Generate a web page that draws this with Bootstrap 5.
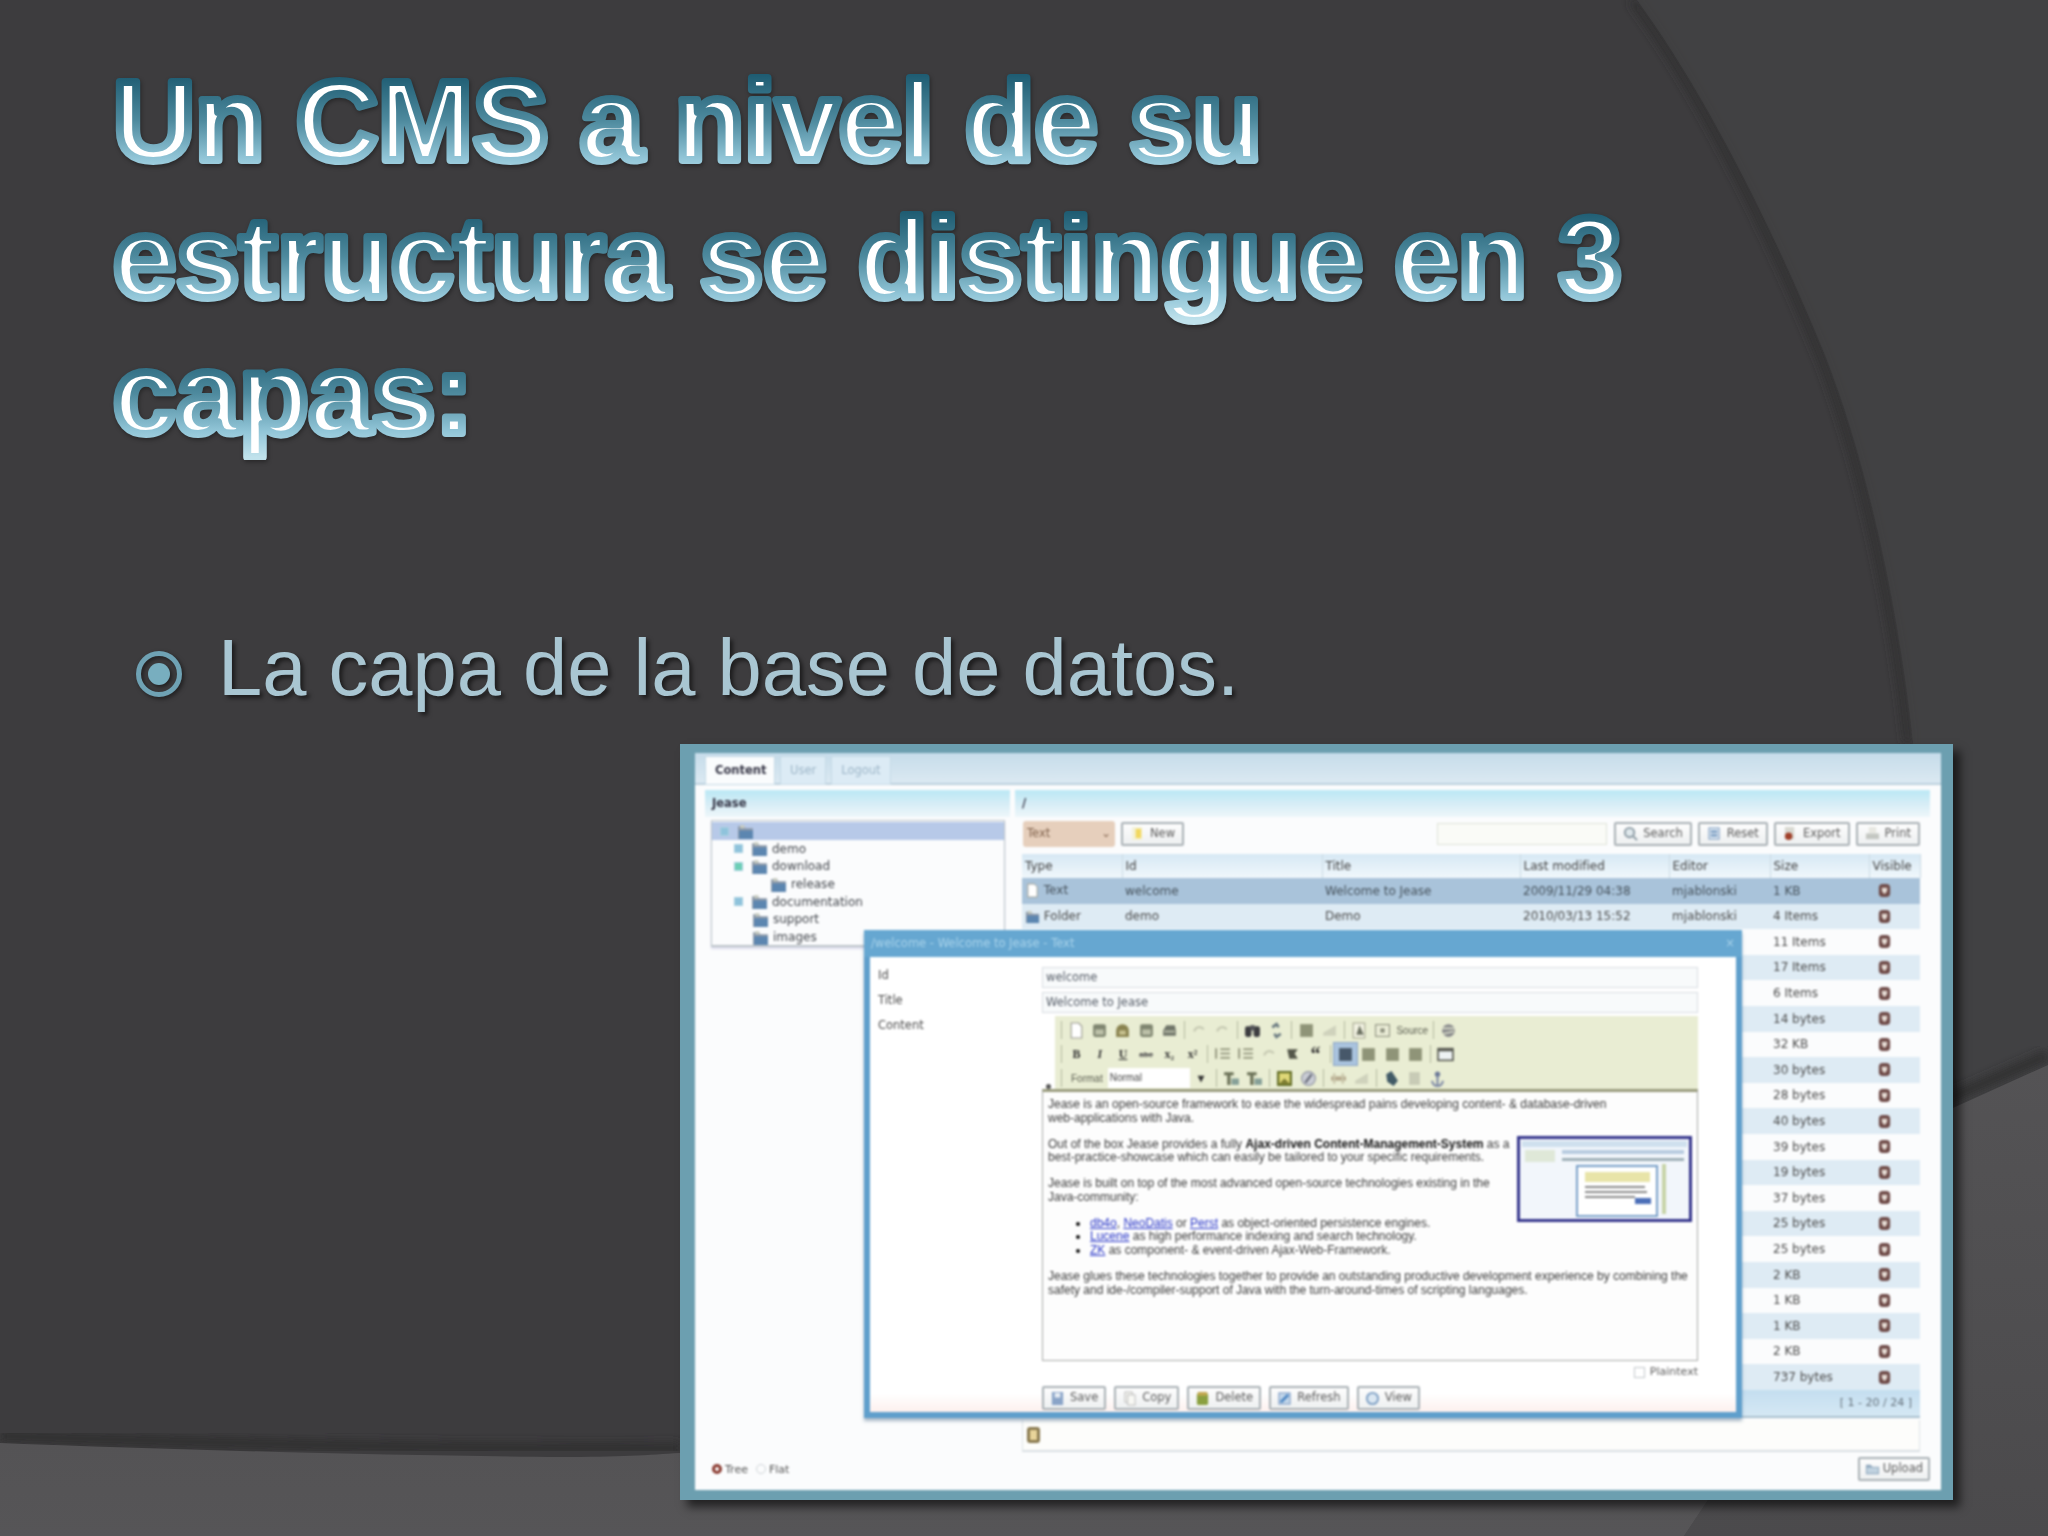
<!DOCTYPE html>
<html lang="es">
<head>
<meta charset="utf-8">
<title>Un CMS a nivel de su estructura</title>
<link href="https://cdn.jsdelivr.net/npm/bootstrap@5.3.0/dist/css/bootstrap.min.css" rel="stylesheet">
<style>
html,body{margin:0;background:#3c3b3d}
.slide-canvas{position:relative;width:2048px;height:1536px;overflow:hidden;background:#3d3c3e;font-family:"Liberation Sans",Arial,sans-serif}
.slide-bg{position:absolute;inset:0;width:2048px;height:1536px}
.slide-flow{position:relative}
.slide-title{margin:0;height:460px}
.title-art{display:block;width:1700px;height:460px;filter:drop-shadow(1px 2px 2px rgba(0,0,0,.35))}
.title-art text{font:700 113.6px "Liberation Sans",Arial,sans-serif;fill:#fff;stroke:url(#titleGrad);stroke-width:8px;stroke-linejoin:round}
.bullet-row{margin-top:163px;padding-left:135px;height:90px;display:flex;align-items:center;gap:35px}
.bullet-text{font-size:79.5px;line-height:90px;color:#a9c6d2;text-shadow:3px 3px 4px rgba(0,0,0,.55)}
.bullet-mark{flex:none;width:48px;height:48px;filter:drop-shadow(2px 2px 2px rgba(0,0,0,.5));margin-top:12px}
.shot{margin:31px 0 0 680px;width:1273px;height:756px;padding:9px 12px 10px 15px;background:#6c9fb0;box-shadow:7px 7px 9px rgba(0,0,0,.6)}
.shot-in{position:relative;height:100%;background:#fbfcfd;display:flex;flex-direction:column;font:11.5px/1.2 "DejaVu Sans",sans-serif;color:#484848;filter:blur(.85px)}
.tab-strip{height:32px;flex:none;padding:3px 10px 0;display:flex;gap:5px;background:linear-gradient(180deg,#c6dcea,#dbe9f2);border-bottom:2px solid #bcd0dd}
.tab-item{height:29px;padding:0 9px;display:flex;align-items:center;background:#dcebf5;color:#9db6c8;border:1px solid #c5dae6}
.tab-item.on{background:#fafcfd;color:#334;font-weight:700;width:70px}
.app-body{flex:1;display:flex;gap:5px;padding:5px 11px 2px 10px;min-height:0}
.app-left{width:305px;flex:none;display:flex;flex-direction:column}
.app-right{flex:1;display:flex;flex-direction:column;min-width:0}
.pane-head{height:27px;flex:none;padding:0 7px;display:flex;align-items:center;background:linear-gradient(180deg,#bfe9f5 10%,#d6edf6 50%,#eef7fa);font-weight:700;color:#334}
.tree-box{margin:3px 5px 0 6px;height:127px;border:1px solid #bcc4c9;border-width:1px 1px 2px;padding:1px 0;box-shadow:0 2px 2px #dde;font-size:12px}
.tree-row{height:17.7px;display:flex;align-items:center;gap:4px;white-space:nowrap;color:#44484e}
.tree-row.sel{height:18px;background:#b7c9e8;padding-left:8px}
.tree-row .ico{width:17px;height:17px}
.lvl1{padding-left:22px}.lvl2{padding-left:58px}.lvl1b{padding-left:40px}
.plus{width:9px;height:9px;flex:none;background:#8fc3dc;border:1px solid #a8d0e0;margin-right:4px}
.plus.g{background:#6ccfb5}
.tree-radio{margin-top:auto;padding:0 0 12px 7px;display:flex;align-items:center;gap:3px;font-size:11px;color:#555}
.radio-on{width:10px;height:10px;border-radius:50%;border:3px solid #8a3a30;background:#fff}
.radio-off{width:10px;height:10px;border-radius:50%;border:1px solid #cfd4d8;margin-left:5px}
.tool-row{height:27px;flex:none;margin-top:3px;padding:0 10px 0 8px;display:flex;align-items:center;gap:6px}
.sel-fake{width:92px;height:26px;padding:0 4px;display:flex;align-items:center;justify-content:space-between;background:#e6cfbc;border-radius:3px;color:#80624c}
.app-btn{display:inline-flex;align-items:center;gap:5px;height:24px;padding:0 7px;font:inherit;color:#5c5c5c;border:2px solid #a9b1b5;border-radius:2px;background:linear-gradient(180deg,#fdfdfd,#eef0f1);--bs-btn-padding-y:0}
.search-fake{width:170px;height:22px;margin-left:auto;margin-right:1px;border:1px solid #dfe3d8;background:#fafbf7}
.grid-wrap{margin:7px 10px 0 7px;flex:none}
.grid-table{table-layout:fixed;width:898px;margin:0;color:#4c4c4c;--bs-table-bg:transparent;font-size:12px}
.grid-table th,.grid-table td{padding:0 0 0 3px;border:0;white-space:nowrap;overflow:hidden;vertical-align:middle;background:transparent;box-shadow:none}
.grid-table th{height:24px;font-weight:400;background:linear-gradient(180deg,#d6e8f4,#f0f7fb);border-right:1px solid #ccdbe4;color:#444}
.grid-table td{height:25.6px}
.grid-table tbody tr:nth-child(even) td{background:#deebf4}
.grid-table tbody tr:nth-child(odd) td{background:#fbfcfd}
.grid-table tbody tr.row-sel td{background:#a9c3da;color:#46525c}
.grid-foot{height:28px;display:flex;align-items:center;justify-content:flex-end;padding-right:8px;background:linear-gradient(180deg,#c4def0,#d5e8f4);border-bottom:2px solid #a9bfce;color:#66727c;font-size:11px}
.bottom-box{margin:2px 10px 0 7px;height:32px;flex:none;border:1px solid #dfe4e7;border-top:0;border-bottom:2px solid #d9dfe3;padding-left:4px;display:flex;align-items:center;background:#fdfdfb}
.note-ico{width:13px;height:16px;border:3px solid #8a7a50;border-radius:3px;background:#e8d49a}
.up-row{display:flex;justify-content:flex-end;padding:5px 0 0;flex:none}
.up-row .app-btn{padding:0 5px;gap:3px}
.dlg{position:absolute;left:169px;top:177px;width:878px;height:488px;background:#fff;border:6px solid #5f9fcc;border-top:0;box-shadow:0 3px 3px rgba(90,120,150,.5);display:flex;flex-direction:column}
.dlg-bar{height:27px;flex:none;margin:0 -6px;padding:0 7px;display:flex;align-items:center;justify-content:space-between;background:#66a7d1;color:#a9d3ea;font-size:11.5px}
.dlg-main{flex:1;display:grid;grid-template-columns:172px 656px;padding:10px 0 0 0;grid-auto-rows:min-content;background:linear-gradient(180deg,#fff 96%,#fdf0ee)}
.dlg-lbl{padding-left:8px;color:#4c4c4c;height:25px;font-size:11.5px;padding-top:2px}
.fake-input{height:21px;margin-bottom:4px;border:1px solid #d8dde2;padding:0 3px;display:flex;align-items:center;color:#565d68;background:#f8fafb}
.fck-tools{height:73px;margin:-1px 0 0 13px;padding:2px 0 0 3px;background:#e9edd3}
.fck-row{height:24px;display:flex;align-items:center;color:#333}
.tb{width:23.2px;flex:none;display:flex;justify-content:center;align-items:center;font-size:12px;font-family:"Liberation Serif",serif;font-weight:700}
.tb.sep{width:1px;height:18px;background:#b4b9a0;margin:0 3px}
.tb.act{background:#a9c3de;outline:1px solid #8ea7c4;height:22px}
.tb-s{font:700 8px "Liberation Sans",sans-serif;color:#555}
.tb .ico{width:17px;height:17px}
.ico{width:15px;height:15px;display:block}
.fck-lbl{font:10px "Liberation Sans",sans-serif;color:#5a5d50;padding:0 5px 0 6px}
.fck-sel{width:82px;height:20px;background:#fff;font:10px "Liberation Sans",sans-serif;padding:4px 2px;color:#444}
.fck-src{font:10px "Liberation Sans",sans-serif;color:#5a5d50;padding:0 2px 0 2px}
.editor{position:relative;height:272px;border:1px solid #a8aaa8;border-top:3px solid #9a9c7e;padding:6px 5px;font:12px/13.6px "Liberation Sans",sans-serif;color:#3c3c3c;background:#fdfdfd}
.editor::before{content:"";position:absolute;left:3px;top:-8px;width:5px;height:5px;background:#555;border-radius:50%}
.editor p{margin:0 0 12.4px;white-space:nowrap}
.editor ul{margin:0 0 12.4px;padding-left:42px}
.editor li::marker{color:#111}
.editor strong{color:#111;font-weight:700}
.editor a{color:#2a37c8}
.thumb-float{float:right;width:175px;height:86px;margin:-2px 0 0 4px;display:block}
.plain-row{grid-column:2;height:20px;padding:2px 0 0;display:flex;justify-content:flex-end;align-items:center;gap:5px;color:#5c5c5c;font-size:11px}
.fake-check{width:11px;height:11px;border:1px solid #c4c8cc}
.dlg-btns{grid-column:2;display:flex;gap:8px;margin-top:5px}
.dlg-btns .app-btn{padding:0 6px}
</style>
</head>
<body>
<svg width="0" height="0" class="d-block position-absolute">
<defs>
<linearGradient id="titleGrad" x1="0" y1="0" x2="0" y2="1"><stop offset=".14" stop-color="#1e5c72"/><stop offset=".5" stop-color="#4e8a9e"/><stop offset=".8" stop-color="#92c6d8"/><stop offset="1" stop-color="#c0e2ec"/></linearGradient>
<symbol id="i-folder" viewBox="0 0 16 16"><path d="M1 3h5l2 2h7v10H1z" fill="#8c98a8"/><path d="M2 7h13v8H2z" fill="#5c86b0"/><path d="M3 2h4v3H3z" fill="#c8ccc0"/></symbol>
<symbol id="i-vis" viewBox="0 0 14 16"><rect x="1" y="1" width="12" height="14" rx="4" fill="#6f4b48"/><path d="M4 5h6l-.5 4L7 12 4.500 9z" fill="#e6dcd4"/></symbol>
<symbol id="i-doc" viewBox="0 0 16 16"><path d="M3 1h7l3 3v11H3z" fill="#fff" stroke="#9a9a90"/></symbol>
<symbol id="i-block" viewBox="0 0 16 16"><rect x="2" y="2" width="12" height="12" rx="2" fill="#7f8570"/><rect x="4" y="7" width="8" height="5" fill="#bcc0a8"/></symbol>
<symbol id="i-dome" viewBox="0 0 16 16"><path d="M2 14V8a6 6 0 0 1 12 0v6z" fill="#8a8350"/><rect x="5" y="8" width="6" height="4" fill="#c8c290"/></symbol>
<symbol id="i-case" viewBox="0 0 16 16"><path d="M2 8l3-5h8l1 5v5H2z" fill="#6f7468"/><rect x="3" y="8" width="10" height="2" fill="#b4b8a4"/></symbol>
<symbol id="i-faint" viewBox="0 0 16 16"><path d="M3 9a5 5 0 0 1 9-2" fill="none" stroke="#c6c9b2" stroke-width="2"/></symbol>
<symbol id="i-bin" viewBox="0 0 16 16"><rect x="1" y="4" width="6" height="10" rx="2" fill="#3d3d40"/><rect x="9" y="4" width="6" height="10" rx="2" fill="#3d3d40"/><rect x="6" y="3" width="4" height="5" fill="#55555a"/></symbol>
<symbol id="i-swap" viewBox="0 0 16 16"><path d="M4 5l4-3 2 3M12 11l-4 3-2-3" fill="none" stroke="#6a7a80" stroke-width="2.500"/></symbol>
<symbol id="i-list" viewBox="0 0 16 16"><path d="M6 3h9M6 7h9M6 11h9M2 2v10" stroke="#85886f" stroke-width="1.500"/></symbol>
<symbol id="i-indent" viewBox="0 0 16 16"><path d="M3 3h10l-3 4 3 5H5z" fill="#54574a"/></symbol>
<symbol id="i-align" viewBox="0 0 16 16"><rect x="2" y="2" width="12" height="12" fill="#8f9478"/></symbol>
<symbol id="i-alignon" viewBox="0 0 16 16"><rect x="2" y="2" width="12" height="12" fill="#47586a"/></symbol>
<symbol id="i-win" viewBox="0 0 16 16"><rect x="1" y="2.500" width="14" height="11" fill="#eef2f4" stroke="#55574f" stroke-width="1.500"/><path d="M1 4h14" stroke="#55574f" stroke-width="2"/></symbol>
<symbol id="i-src" viewBox="0 0 16 16"><rect x="1.500" y="2.500" width="13" height="11" fill="#eceed8" stroke="#8b8e7c"/><rect x="6" y="6" width="4" height="4" fill="#8b8e7c"/></symbol>
<symbol id="i-prev" viewBox="0 0 16 16"><rect x="2" y="1" width="11" height="14" fill="#f2f2e2" stroke="#a6a890"/><path d="M8 3l4 9H5z" fill="#6d7262"/></symbol>
<symbol id="i-earth" viewBox="0 0 16 16"><circle cx="8" cy="8" r="6" fill="#87888a"/><path d="M2 6h12M3 11l10-2" stroke="#dcdfcc" stroke-width="1.500"/></symbol>
<symbol id="i-tcol" viewBox="0 0 16 16"><path d="M1 2h9v3H7v9H4V5H1z" fill="#6a7056"/><rect x="8" y="8" width="7" height="6" fill="#86a098"/></symbol>
<symbol id="i-pic" viewBox="0 0 16 16"><rect x="1" y="1" width="14" height="14" fill="#5f6a20"/><rect x="3" y="3" width="10" height="10" fill="#e0d878"/><path d="M3 13l5-5 5 5z" fill="#7a7a30"/></symbol>
<symbol id="i-flash" viewBox="0 0 16 16"><circle cx="8" cy="8" r="6.500" fill="#c9ccd4" stroke="#8f93a0"/><path d="M11 4L5 12" stroke="#6a6e7c" stroke-width="2"/></symbol>
<symbol id="i-tbl" viewBox="0 0 16 16"><path d="M1 8h14" stroke="#b6aa8e" stroke-width="4"/><path d="M4 3v10M12 3v10" stroke="#c8c4a8" stroke-width="2"/></symbol>
<symbol id="i-smile" viewBox="0 0 16 16"><path d="M2 10L14 3v10H2z" fill="#cfd2bc"/></symbol>
<symbol id="i-dark" viewBox="0 0 16 16"><path d="M3 4l5-3 6 9-4 5-6-4z" fill="#415a66"/></symbol>
<symbol id="i-pale" viewBox="0 0 16 16"><rect x="3" y="2" width="10" height="12" fill="#c8cbb6"/></symbol>
<symbol id="i-anchor" viewBox="0 0 16 16"><circle cx="8" cy="4" r="2.500" fill="#6d7a98"/><path d="M8 6v8M3 10a5 5 0 0 0 10 0" fill="none" stroke="#7f8aa6" stroke-width="2"/></symbol>
<symbol id="i-search" viewBox="0 0 16 16"><circle cx="7" cy="7" r="5" fill="#dfe8ec" stroke="#8b9aa3" stroke-width="2"/><path d="M11 11l4 4" stroke="#8b9aa3" stroke-width="2"/></symbol>
<symbol id="i-reset" viewBox="0 0 16 16"><rect x="2" y="2" width="11" height="12" fill="#d8e4ef" stroke="#7e9cc0"/><path d="M4 6h7M4 10h7" stroke="#5e86b4" stroke-width="2"/></symbol>
<symbol id="i-export" viewBox="0 0 16 16"><rect x="2" y="1" width="10" height="13" fill="#d9d9d2"/><circle cx="6" cy="11" r="4" fill="#a0402a"/></symbol>
<symbol id="i-print" viewBox="0 0 16 16"><rect x="4" y="1" width="8" height="7" fill="#e8e8e2"/><rect x="1" y="8" width="14" height="6" fill="#c4c7c2"/></symbol>
<symbol id="i-new" viewBox="0 0 16 16"><rect x="2" y="1" width="11" height="14" fill="#f4f2da"/><rect x="6" y="3" width="6" height="10" fill="#f2d85f"/></symbol>
<symbol id="i-save" viewBox="0 0 16 16"><rect x="2" y="1" width="12" height="14" fill="#8aa4c8"/><rect x="5" y="2" width="6" height="5" fill="#e8eef5"/></symbol>
<symbol id="i-copy" viewBox="0 0 16 16"><path d="M3 1h8v11H3z" fill="#f3f3ee" stroke="#bbb"/><path d="M6 4h8v11H6z" fill="#f8f8f4" stroke="#bbb"/></symbol>
<symbol id="i-del" viewBox="0 0 16 16"><rect x="2" y="2" width="12" height="13" rx="2" fill="#8aa040"/><rect x="3" y="1" width="10" height="4" fill="#c3a850"/></symbol>
<symbol id="i-ref" viewBox="0 0 16 16"><rect x="2" y="2" width="12" height="12" fill="#c2d6ea" stroke="#7694be"/><path d="M4 12L12 4" stroke="#4f88c4" stroke-width="3"/></symbol>
<symbol id="i-view" viewBox="0 0 16 16"><circle cx="8" cy="8" r="6" fill="#dbe7f2" stroke="#7d9fc4" stroke-width="2"/></symbol>
<symbol id="i-up" viewBox="0 0 16 16"><path d="M1 4h5l2 2h7v8H1z" fill="#8ea6bc"/><rect x="2" y="7" width="12" height="6" fill="#c0d2e0"/></symbol>
</defs>
</svg>

<div class="slide-canvas">
  <svg class="slide-bg" viewBox="0 0 2048 1536" aria-hidden="true">
    <defs>
      <linearGradient id="bgLow" x1="0" y1="0" x2="0" y2="1"><stop offset="0" stop-color="#545355"/><stop offset="1" stop-color="#4b4a4c"/></linearGradient>
      <linearGradient id="bgBot" x1="0" y1="0" x2="0" y2="1"><stop offset="0" stop-color="#545355"/><stop offset="1" stop-color="#565557"/></linearGradient>
      <filter id="softEdge" x="-20%" y="-20%" width="140%" height="140%"><feGaussianBlur stdDeviation="5"/></filter>
    </defs>
    <path d="M1637 0C1700 85 1770 220 1825 355C1870 470 1900 620 1913 743L1960 1110 2048 1065V0Z" fill="#424143"/>
    <path d="M1632 0C1695 85 1765 220 1820 355C1865 470 1895 620 1908 743" fill="none" stroke="#2e2d2f" stroke-width="7" filter="url(#softEdge)"/>
    <path d="M1637 0C1700 85 1770 220 1825 355C1870 470 1900 620 1913 743L1960 1110 2048 1065V0Z" fill="#424143" opacity=".75"/>
    <path d="M1945 1100L2048 1055" fill="none" stroke="#2e2d2f" stroke-width="10" filter="url(#softEdge)"/>
    <path d="M1953 1108L2048 1065V1536H1684L1708 1500H1953Z" fill="url(#bgLow)"/>
    <path d="M0 1436C250 1444 470 1450 680 1448" fill="none" stroke="#2e2d2f" stroke-width="10" filter="url(#softEdge)"/>
    <path d="M0 1443C180 1450 400 1456 560 1457 620 1457 650 1455 680 1453V1500H1708L1684 1536H0Z" fill="url(#bgBot)"/>
  </svg>
  <div class="slide-flow">
    <h1 class="slide-title">
      <svg class="title-art" viewBox="0 0 1700 460">
        <text x="113" y="160">Un CMS a nivel de su</text>
        <text x="113" y="296.500">estructura se distingue en 3</text>
        <text x="113" y="433">capas:</text>
      </svg>
    </h1>
    <div class="bullet-row">
      <svg class="bullet-mark" viewBox="0 0 48 48"><circle cx="24" cy="24" r="20.500" fill="none" stroke="#6fa2b4" stroke-width="5"/><circle cx="24" cy="24" r="11" fill="#78aebf"/></svg>
      <span class="bullet-text">La capa de la base de datos.</span>
    </div>
    <div class="shot">
      <div class="shot-in">
        <div class="tab-strip">
          <div class="tab-item on">Content</div><div class="tab-item">User</div><div class="tab-item">Logout</div>
        </div>
        <div class="app-body">
          <div class="app-left">
            <div class="pane-head">Jease</div>
            <div class="tree-box">
              <div class="tree-row sel"><span class="plus"></span><svg class="ico"><use href="#i-folder"/></svg></div>
              <div class="tree-row lvl1"><span class="plus"></span><svg class="ico"><use href="#i-folder"/></svg>demo</div>
              <div class="tree-row lvl1"><span class="plus g"></span><svg class="ico"><use href="#i-folder"/></svg>download</div>
              <div class="tree-row lvl2"><svg class="ico"><use href="#i-folder"/></svg>release</div>
              <div class="tree-row lvl1"><span class="plus"></span><svg class="ico"><use href="#i-folder"/></svg>documentation</div>
              <div class="tree-row lvl1b"><svg class="ico"><use href="#i-folder"/></svg>support</div>
              <div class="tree-row lvl1b"><svg class="ico"><use href="#i-folder"/></svg>images</div>
            </div>
            <div class="tree-radio"><span class="radio-on"></span>Tree<span class="radio-off"></span>Flat</div>
          </div>
          <div class="app-right">
            <div class="pane-head">/</div>
            <div class="tool-row">
              <div class="sel-fake">Text<span>&#8964;</span></div>
              <button class="btn app-btn" type="button"><svg class="ico"><use href="#i-new"/></svg>New</button>
              <div class="search-fake"></div>
              <button class="btn app-btn" type="button"><svg class="ico"><use href="#i-search"/></svg>Search</button>
              <button class="btn app-btn" type="button"><svg class="ico"><use href="#i-reset"/></svg>Reset</button>
              <button class="btn app-btn" type="button"><svg class="ico"><use href="#i-export"/></svg>Export</button>
              <button class="btn app-btn" type="button"><svg class="ico"><use href="#i-print"/></svg>Print</button>
            </div>
            <div class="grid-wrap">
              <table class="table grid-table">
                <colgroup><col style="width:100px"><col style="width:200px"><col style="width:198px"><col style="width:149px"><col style="width:101px"><col style="width:99px"><col style="width:51px"></colgroup>
                <thead><tr><th>Type</th><th>Id</th><th>Title</th><th>Last modified</th><th>Editor</th><th>Size</th><th>Visible</th></tr></thead>
                <tbody>
                  <tr class="row-sel"><td><svg class="ico d-inline-block align-middle"><use href="#i-doc"/></svg> Text</td><td>welcome</td><td>Welcome to Jease</td><td>2009/11/29 04:38</td><td>mjablonski</td><td>1 KB</td><td class="ps-2"><svg class="ico"><use href="#i-vis"/></svg></td></tr>
                  <tr><td><svg class="ico d-inline-block align-middle"><use href="#i-folder"/></svg> Folder</td><td>demo</td><td>Demo</td><td>2010/03/13 15:52</td><td>mjablonski</td><td>4 Items</td><td class="ps-2"><svg class="ico"><use href="#i-vis"/></svg></td></tr>
                  <tr><td></td><td></td><td></td><td></td><td></td><td>11 Items</td><td class="ps-2"><svg class="ico"><use href="#i-vis"/></svg></td></tr>
                  <tr><td></td><td></td><td></td><td></td><td></td><td>17 Items</td><td class="ps-2"><svg class="ico"><use href="#i-vis"/></svg></td></tr>
                  <tr><td></td><td></td><td></td><td></td><td></td><td>6 Items</td><td class="ps-2"><svg class="ico"><use href="#i-vis"/></svg></td></tr>
                  <tr><td></td><td></td><td></td><td></td><td></td><td>14 bytes</td><td class="ps-2"><svg class="ico"><use href="#i-vis"/></svg></td></tr>
                  <tr><td></td><td></td><td></td><td></td><td></td><td>32 KB</td><td class="ps-2"><svg class="ico"><use href="#i-vis"/></svg></td></tr>
                  <tr><td></td><td></td><td></td><td></td><td></td><td>30 bytes</td><td class="ps-2"><svg class="ico"><use href="#i-vis"/></svg></td></tr>
                  <tr><td></td><td></td><td></td><td></td><td></td><td>28 bytes</td><td class="ps-2"><svg class="ico"><use href="#i-vis"/></svg></td></tr>
                  <tr><td></td><td></td><td></td><td></td><td></td><td>40 bytes</td><td class="ps-2"><svg class="ico"><use href="#i-vis"/></svg></td></tr>
                  <tr><td></td><td></td><td></td><td></td><td></td><td>39 bytes</td><td class="ps-2"><svg class="ico"><use href="#i-vis"/></svg></td></tr>
                  <tr><td></td><td></td><td></td><td></td><td></td><td>19 bytes</td><td class="ps-2"><svg class="ico"><use href="#i-vis"/></svg></td></tr>
                  <tr><td></td><td></td><td></td><td></td><td></td><td>37 bytes</td><td class="ps-2"><svg class="ico"><use href="#i-vis"/></svg></td></tr>
                  <tr><td></td><td></td><td></td><td></td><td></td><td>25 bytes</td><td class="ps-2"><svg class="ico"><use href="#i-vis"/></svg></td></tr>
                  <tr><td></td><td></td><td></td><td></td><td></td><td>25 bytes</td><td class="ps-2"><svg class="ico"><use href="#i-vis"/></svg></td></tr>
                  <tr><td></td><td></td><td></td><td></td><td></td><td>2 KB</td><td class="ps-2"><svg class="ico"><use href="#i-vis"/></svg></td></tr>
                  <tr><td></td><td></td><td></td><td></td><td></td><td>1 KB</td><td class="ps-2"><svg class="ico"><use href="#i-vis"/></svg></td></tr>
                  <tr><td></td><td></td><td></td><td></td><td></td><td>1 KB</td><td class="ps-2"><svg class="ico"><use href="#i-vis"/></svg></td></tr>
                  <tr><td></td><td></td><td></td><td></td><td></td><td>2 KB</td><td class="ps-2"><svg class="ico"><use href="#i-vis"/></svg></td></tr>
                  <tr><td></td><td></td><td></td><td></td><td></td><td>737 bytes</td><td class="ps-2"><svg class="ico"><use href="#i-vis"/></svg></td></tr>
                </tbody>
              </table>
              <div class="grid-foot">[ 1 - 20 / 24 ]</div>
            </div>
            <div class="bottom-box"><span class="note-ico"></span></div>
            <div class="up-row"><button class="btn app-btn" type="button"><svg class="ico"><use href="#i-up"/></svg>Upload</button></div>
          </div>
        </div>

        <div class="dlg">
          <div class="dlg-bar"><span>/welcome - Welcome to Jease - Text</span><span>&#215;</span></div>
          <div class="dlg-main">
            <div class="dlg-lbl">Id</div><div class="fake-input">welcome</div>
            <div class="dlg-lbl">Title</div><div class="fake-input">Welcome to Jease</div>
            <div class="dlg-lbl">Content</div>
            <div>
              <div class="fck-tools">
                <div class="fck-row"><span class="tb sep"></span><span class="tb"><svg class="ico"><use href="#i-doc"/></svg></span><span class="tb"><svg class="ico"><use href="#i-block"/></svg></span><span class="tb"><svg class="ico"><use href="#i-dome"/></svg></span><span class="tb"><svg class="ico"><use href="#i-block"/></svg></span><span class="tb"><svg class="ico"><use href="#i-case"/></svg></span><span class="tb sep"></span><span class="tb"><svg class="ico"><use href="#i-faint"/></svg></span><span class="tb"><svg class="ico"><use href="#i-faint"/></svg></span><span class="tb sep"></span><span class="tb"><svg class="ico"><use href="#i-bin"/></svg></span><span class="tb"><svg class="ico"><use href="#i-swap"/></svg></span><span class="tb sep"></span><span class="tb"><svg class="ico"><use href="#i-align"/></svg></span><span class="tb"><svg class="ico"><use href="#i-smile"/></svg></span><span class="tb sep"></span><span class="tb"><svg class="ico"><use href="#i-prev"/></svg></span><span class="tb"><svg class="ico"><use href="#i-src"/></svg></span><span class="fck-src">Source</span><span class="tb sep"></span><span class="tb"><svg class="ico"><use href="#i-earth"/></svg></span></div>
                <div class="fck-row"><span class="tb sep"></span><span class="tb">B</span><span class="tb fst-italic">I</span><span class="tb text-decoration-underline">U</span><span class="tb"><s class="tb-s">abc</s></span><span class="tb">x&#8322;</span><span class="tb">x&#178;</span><span class="tb sep"></span><span class="tb"><svg class="ico"><use href="#i-list"/></svg></span><span class="tb"><svg class="ico"><use href="#i-list"/></svg></span><span class="tb"><svg class="ico"><use href="#i-faint"/></svg></span><span class="tb"><svg class="ico"><use href="#i-indent"/></svg></span><span class="tb fs-5">&#8220;</span><span class="tb sep"></span><span class="tb act"><svg class="ico"><use href="#i-alignon"/></svg></span><span class="tb"><svg class="ico"><use href="#i-align"/></svg></span><span class="tb"><svg class="ico"><use href="#i-align"/></svg></span><span class="tb"><svg class="ico"><use href="#i-align"/></svg></span><span class="tb sep"></span><span class="tb"><svg class="ico"><use href="#i-win"/></svg></span></div>
                <div class="fck-row"><span class="tb sep"></span><span class="fck-lbl">Format</span><span class="fck-sel">Normal</span><span class="tb">&#9662;</span><span class="tb sep"></span><span class="tb"><svg class="ico"><use href="#i-tcol"/></svg></span><span class="tb"><svg class="ico"><use href="#i-tcol"/></svg></span><span class="tb sep"></span><span class="tb"><svg class="ico"><use href="#i-pic"/></svg></span><span class="tb"><svg class="ico"><use href="#i-flash"/></svg></span><span class="tb sep"></span><span class="tb"><svg class="ico"><use href="#i-tbl"/></svg></span><span class="tb"><svg class="ico"><use href="#i-smile"/></svg></span><span class="tb sep"></span><span class="tb"><svg class="ico"><use href="#i-dark"/></svg></span><span class="tb"><svg class="ico"><use href="#i-pale"/></svg></span><span class="tb"><svg class="ico"><use href="#i-anchor"/></svg></span></div>
              </div>
              <div class="editor">
                <p>Jease is an open-source framework to ease the widespread pains developing content- &amp; database-driven<br>web-applications with Java.</p>
                <svg class="thumb-float" viewBox="0 0 175 86">
                  <rect x="1.500" y="1.500" width="172" height="83" fill="#f2f6fb" stroke="#35358c" stroke-width="3"/>
                  <rect x="5" y="5" width="165" height="6" fill="#cfe0ee"/>
                  <rect x="8" y="14" width="30" height="12" fill="#dfe8d8"/>
                  <rect x="45" y="14" width="122" height="4" fill="#b8cce0"/>
                  <rect x="45" y="22" width="122" height="3" fill="#9fb0b8"/>
                  <rect x="60" y="30" width="80" height="50" fill="#fff" stroke="#7aa0c8" stroke-width="2"/>
                  <rect x="68" y="36" width="65" height="10" fill="#e8e4a8"/>
                  <rect x="68" y="50" width="60" height="2" fill="#888"/><rect x="68" y="55" width="62" height="2" fill="#888"/><rect x="68" y="60" width="50" height="2" fill="#888"/>
                  <rect x="118" y="62" width="16" height="6" fill="#4c6fb8"/>
                  <rect x="145" y="28" width="4" height="50" fill="#c8d4a8"/>
                </svg>
                <p>Out of the box Jease provides a fully <strong>Ajax-driven Content-Management-System</strong> as a<br>best-practice-showcase which can easily be tailored to your specific requirements.</p>
                <p>Jease is built on top of the most advanced open-source technologies existing in the<br>Java-community:</p>
                <ul>
                  <li><a href="#">db4o</a>, <a href="#">NeoDatis</a> or <a href="#">Perst</a> as object-oriented persistence engines.</li>
                  <li><a href="#">Lucene</a> as high performance indexing and search technology.</li>
                  <li><a href="#">ZK</a> as component- &amp; event-driven Ajax-Web-Framework.</li>
                </ul>
                <p>Jease glues these technologies together to provide an outstanding productive development experience by combining the<br>safety and ide-/compiler-support of Java with the turn-around-times of scripting languages.</p>
              </div>
            </div>
            <div class="plain-row"><span class="fake-check"></span>Plaintext</div>
            <div class="dlg-btns">
              <button class="btn app-btn" type="button"><svg class="ico"><use href="#i-save"/></svg>Save</button>
              <button class="btn app-btn" type="button"><svg class="ico"><use href="#i-copy"/></svg>Copy</button>
              <button class="btn app-btn" type="button"><svg class="ico"><use href="#i-del"/></svg>Delete</button>
              <button class="btn app-btn" type="button"><svg class="ico"><use href="#i-ref"/></svg>Refresh</button>
              <button class="btn app-btn" type="button"><svg class="ico"><use href="#i-view"/></svg>View</button>
            </div>
          </div>
        </div>
      </div>
    </div>
  </div>
</div>
<script src="https://cdn.jsdelivr.net/npm/bootstrap@5.3.0/dist/js/bootstrap.bundle.min.js"></script>
</body>
</html>
